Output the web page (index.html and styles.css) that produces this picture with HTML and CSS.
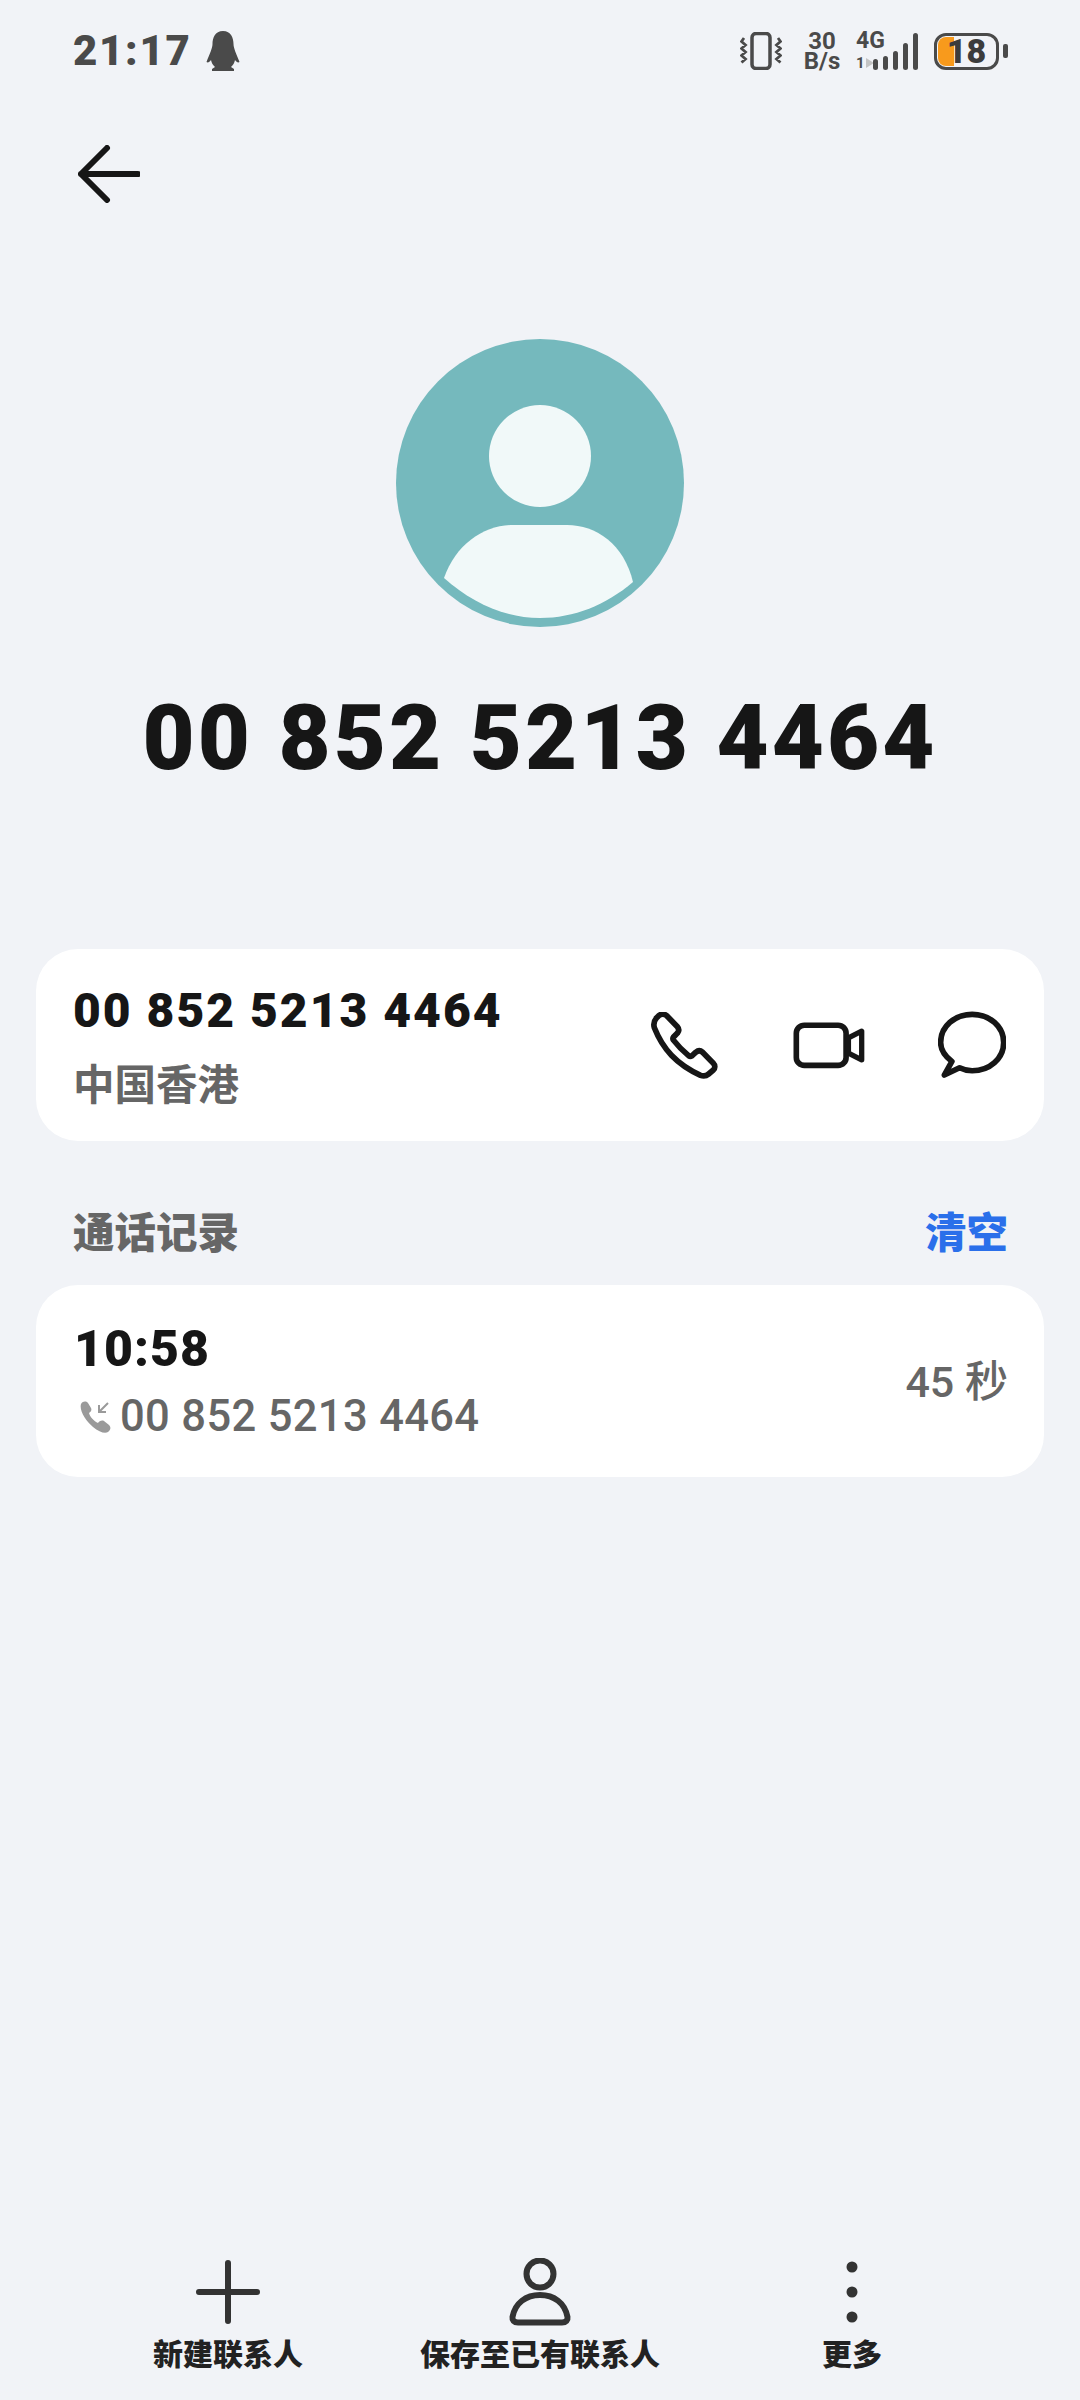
FILE: index.html
```html
<!DOCTYPE html>
<html lang="zh">
<head>
<meta charset="utf-8">
<title>通话详情</title>
<link rel="stylesheet" href="styles.css">
</head>
<body>
<div class="page">
  <header class="status">
    <div class="status-left">
      <span class="clock">21:17</span>
      <svg class="penguin" viewBox="0 0 34 40"><path d="M17 0C25 0 27.500 7 27.500 13C27.500 17 30 22 33.500 31C32 32 30.500 31 29 29C28.500 32 27 34 25 36L28 38V40H6V38L9 36C7 34 5.500 32 5 29C3.500 31 2 32 .5 31C4 22 6.500 17 6.500 13C6.500 7 9 0 17 0Z" fill="#4a4a4a"/></svg>
    </div>
    <div class="status-right">
      <svg class="vib" viewBox="0 0 42 38"><rect x="12" y="1.500" width="18" height="35" rx="4" fill="none" stroke="#4a4a4a" stroke-width="3.500"/><path d="M4 6L1.500 9.500L5.500 13L1.500 16.500L5.500 20L1.500 23.500L5.500 27L1.500 30.500M38 6L40.500 9.500L36.500 13L40.500 16.500L36.500 20L40.500 23.500L36.500 27L40.500 30.500" fill="none" stroke="#4a4a4a" stroke-width="2.800"/></svg>
      <div class="speed">30<br>B/s</div>
      <div class="net">
        <span class="g4">4G</span>
        <span class="arrows">1<i></i></span>
        <div class="bars"><i class="b1"></i><i class="b2"></i><i class="b3"></i><i class="b4"></i><i class="b5"></i></div>
      </div>
      <div class="battery"><div class="cell"><div class="fill"></div><span class="pct">18</span></div><div class="nub"></div></div>
    </div>
  </header>

  <nav class="nav">
    <svg class="back" viewBox="0 0 62 58"><path d="M29 3L3 29L29 55M3 29H60" fill="none" stroke="#161616" stroke-width="6" stroke-linecap="round" stroke-linejoin="round"/></svg>
  </nav>

  <section class="hero">
    <svg class="avatar" viewBox="0 0 288 288"><circle cx="144" cy="144" r="144" fill="#75b9bd"/><circle cx="144" cy="117" r="51" fill="#f1f9f9"/><path d="M48 239C60 205 88 186 117 186H171C200 186 228 205 237 243C210 266 178 279 144 279C108 279 75 263 48 239Z" fill="#f1f9f9"/></svg>
    <h1 class="name">00 852 5213 4464</h1>
  </section>

  <section class="card contact">
    <div class="col col-contact">
      <div class="num">00 852 5213 4464</div>
      <div class="region">中国香港</div>
    </div>
    <div class="actions">
      <svg class="act phone" viewBox="90 95 200 200"><path d="M113 106C120 100 130 100 137 106L168 138C174 145 174 152 169 158L157 170C155 173 155 176 157 179C170 196 186 212 203 226C206 228 209 228 212 226L224 215C230 210 238 210 244 215L276 248C282 254 282 263 276 268L262 280C255 286 246 287 238 284C165 250 125 205 100 142C97 132 100 120 107 112Z" fill="none" stroke="#161616" stroke-width="17" stroke-linejoin="round"/></svg>
      <svg class="act video" viewBox="515 125 220 140"><rect x="525" y="134" width="150" height="121" rx="24" fill="none" stroke="#161616" stroke-width="17"/><path d="M682 172L722 152V238L682 218Z" fill="none" stroke="#161616" stroke-width="16" stroke-linejoin="round"/></svg>
      <svg class="act chat" viewBox="953 93 205 205"><path d="M995 245C972 228 961 208 961 188C961 140 1003 103 1056 103C1109 103 1151 140 1151 188C1151 236 1109 273 1056 273C1042 273 1030 270 1018 264L972 286Z" fill="none" stroke="#161616" stroke-width="17" stroke-linejoin="round"/></svg>
    </div>
  </section>

  <div class="section-head">
    <span class="section-title">通话记录</span>
    <span class="clear">清空</span>
  </div>

  <section class="card record">
    <div class="col">
      <div class="time">10:58</div>
      <div class="sub">
        <svg class="incoming" viewBox="0 0 32 32"><path d="M2 3C4 0 7 0 9 2L12 7C13 9 12 11 10 12C11 16 15 20 19 22C20 20 23 19 25 20L30 24C32 26 32 29 29 31C26 33 20 31 14 26C7 20 0 10 2 3Z" fill="#9a9a9a"/><path d="M29 2L20 11M20 4V11H27" fill="none" stroke="#9a9a9a" stroke-width="2"/></svg>
        <span>00 852 5213 4464</span>
      </div>
    </div>
    <div class="dur">45 秒</div>
  </section>

  <footer class="bottom">
    <div class="tool t1">
      <svg class="tool-icon" viewBox="0 0 68 68"><path d="M34 5V63M5 34H63" stroke="#333" stroke-width="6" stroke-linecap="round"/></svg>
      <span>新建联系人</span>
    </div>
    <div class="tool t2">
      <svg class="tool-icon" viewBox="0 0 68 68"><circle cx="34" cy="16" r="13.500" fill="none" stroke="#333" stroke-width="6"/><path d="M12 64.500C8 64.500 6 62 6.500 59C9 45 20 37 34 37C48 37 59 45 61.500 59C62 62 60 64.500 56 64.500Z" fill="none" stroke="#333" stroke-width="6" stroke-linejoin="round"/></svg>
      <span>保存至已有联系人</span>
    </div>
    <div class="tool t3">
      <svg class="tool-icon" viewBox="0 0 68 68"><circle cx="34" cy="9" r="5.500" fill="#333"/><circle cx="34" cy="34" r="5.500" fill="#333"/><circle cx="34" cy="59" r="5.500" fill="#333"/></svg>
      <span>更多</span>
    </div>
  </footer>
</div>
</body>
</html>
```
FILE: styles.css
```css
* { box-sizing: border-box; }
html, body { margin: 0; padding: 0; }
body { background: #f1f3f7; font-family: Roboto, "Noto Sans CJK SC", sans-serif; }
.page { width: 1080px; height: 2400px; display: flex; flex-direction: column; background: #f1f3f7; }

.status { height: 100px; padding: 30px 72px 0 73px; display: flex; justify-content: space-between; align-items: flex-start; }
.status-left { display: flex; align-items: center; gap: 15px; height: 42px; }
.clock { font-size: 42px; font-weight: 900; color: #4a4a4a; letter-spacing: 1.700px; line-height: 42px; }
.penguin { width: 34px; height: 40px; }
.status-right { display: flex; align-items: center; height: 42px; }
.vib { width: 42px; height: 38px; margin-right: 20px; }
.speed { width: 40px; text-align: center; font-size: 24px; line-height: 20px; font-weight: 700; color: #4a4a4a; margin-right: 14px; white-space: nowrap; }
.net { position: relative; width: 62px; height: 37px; flex: none; }
.g4 { position: absolute; left: 0; top: -2px; font-size: 23px; line-height: 20px; font-weight: 700; color: #4a4a4a; }
.arrows { position: absolute; left: 0; bottom: 0; font-size: 15px; line-height: 13px; font-weight: 700; color: #4a4a4a; display: flex; align-items: center; gap: 1px; }
.arrows i { width: 0; height: 0; border-left: 8px solid #c4c4c4; border-top: 5px solid transparent; border-bottom: 5px solid transparent; }
.bars { position: absolute; right: 0; bottom: 0; display: flex; align-items: flex-end; gap: 4.500px; }
.bars i { display: block; width: 5.500px; background: #4a4a4a; border-radius: 2.500px; }
.b1 { height: 11px; }
.b2 { height: 14px; }
.b3 { height: 19px; }
.b4 { height: 27px; }
.b5 { height: 37px; }
.battery { display: flex; align-items: center; margin-left: 16px; gap: 4px; }
.cell { position: relative; width: 65px; height: 37px; border: 3.500px solid #4a4a4a; border-radius: 12px; display: flex; align-items: center; justify-content: center; }
.fill { position: absolute; left: 1px; top: 1px; bottom: 1px; width: 16px; background: #f89a1c; border-radius: 8px 0 0 8px; }
.pct { position: relative; font-size: 34px; font-weight: 900; color: #3c3c3c; line-height: 30px; }
.nub { width: 5px; height: 14px; background: #4a4a4a; border-radius: 2px; }

.nav { height: 58px; margin-top: 45px; padding-left: 78px; display: flex; align-items: center; }
.back { width: 62px; height: 58px; }

.hero { display: flex; flex-direction: column; align-items: center; margin-top: 136px; }
.avatar { width: 288px; height: 288px; display: block; }
.name { margin: 67px 0 0; font-size: 90px; line-height: 90px; font-weight: 900; color: #161616; letter-spacing: 3.100px; white-space: nowrap; }

.card { margin: 0 36px; width: 1008px; height: 192px; background: #fff; border-radius: 42px; display: flex; align-items: center; justify-content: space-between; }
.contact { margin-top: 165px; padding: 0 38px 0 37px; }
.col { display: flex; flex-direction: column; }
.col-contact { padding-top: 5px; }
.num { font-size: 48px; line-height: 60px; font-weight: 900; color: #161616; letter-spacing: 2px; white-space: nowrap; }
.region { font-size: 41.500px; line-height: 56px; font-weight: 700; color: #666; margin-top: 17px; }
.actions { display: flex; align-items: center; gap: 72px; }
.act { display: block; }
.phone { width: 67px; height: 67px; margin-right: 3px; }
.video { width: 73px; height: 47px; }
.chat { width: 68px; height: 68px; }

.section-head { margin-top: 64px; padding: 0 72px 0 73px; height: 58px; display: flex; justify-content: space-between; align-items: center; }
.section-title { font-size: 41.500px; font-weight: 900; color: #666; line-height: 58px; }
.clear { font-size: 41.500px; font-weight: 900; color: #2a6fea; line-height: 58px; }

.record { margin-top: 22px; padding: 0 36px 0 38px; }
.time { font-size: 50px; line-height: 60px; font-weight: 900; color: #161616; letter-spacing: 1px; }
.sub { display: flex; align-items: center; gap: 9px; margin-top: 12px; margin-left: 5px; font-size: 43.500px; line-height: 52px; font-weight: 500; color: #666; letter-spacing: .35px; white-space: nowrap; }
.incoming { width: 32px; height: 32px; }
.dur { font-size: 43px; font-weight: 500; color: #666; margin-bottom: 6px; }

.bottom { margin-top: auto; height: 142px; display: flex; justify-content: center; }
.tool { display: flex; flex-direction: column; align-items: center; font-size: 30px; font-weight: 900; line-height: 40px; color: #222; white-space: nowrap; }
.tool-icon { width: 68px; height: 68px; display: block; margin-bottom: 9px; }
.t1 { width: 300px; }
.t2 { width: 324px; }
.t3 { width: 300px; }
```
